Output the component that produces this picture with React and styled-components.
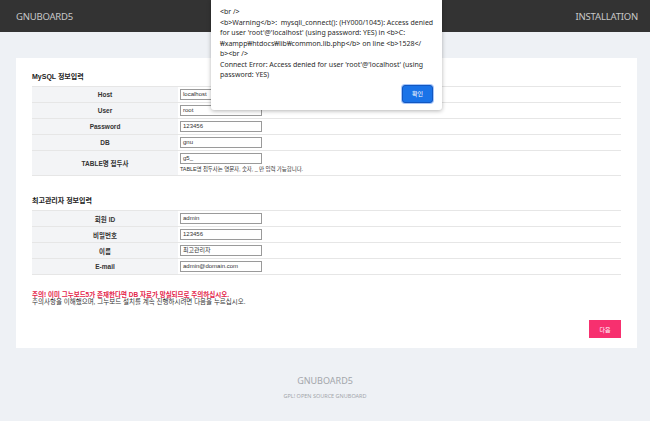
import React from 'react';
import styled, { createGlobalStyle } from 'styled-components';

const GlobalStyle = createGlobalStyle`
    html, body {
        margin: 0;
        padding: 0;
        background: #eef1f5;
        font-family: "Noto Sans", "Noto Sans CJK KR", sans-serif;
    }
`

const Page = styled.div`
    position: relative;
    width: 650px;
    min-height: 421px;
`

const Header = styled.header`
    height: 32px;
    background: #333333;
    display: flex;
    align-items: center;
    justify-content: space-between;
    padding: 0 12px 0 16px;
    color: #c8c8c8;
    font-size: 9.5px;
    letter-spacing: -0.2px;
`

const Card = styled.main`
    margin: 26px 13px 0 16px;
    background: #fff;
    padding: 12px 16px 10px;
    height: 268px;
    display: flex;
    flex-direction: column;
`

const SectionTitle = styled.h2`
    margin: 0 0 2px;
    height: 14px;
    line-height: 14px;
    font-size: 7px;
    font-weight: bold;
    color: #222;
    font-family: "Liberation Sans", "Noto Sans CJK KR", sans-serif;
`

const Table = styled.table`
    width: 100%;
    border-collapse: collapse;
    margin-bottom: ${p => p.$gap || 0}px;

    tr {
        border-top: 1px solid #e6e6e6;
        border-bottom: 1px solid #e6e6e6;
    }
`

const Label = styled.th`
    width: 146px;
    height: ${p => p.$tall ? 24 : 15}px;
    padding: 0;
    background: #f3f4f6;
    font-size: 6.5px;
    font-weight: bold;
    color: #333;
    text-align: center;
    font-family: "Liberation Sans", "Noto Sans CJK KR", sans-serif;
`

const Cell = styled.td`
    padding: 0 0 0 2px;
    vertical-align: middle;
`

const Input = styled.div`
    box-sizing: border-box;
    width: 82px;
    height: 11px;
    border: 1px solid #9a9a9a;
    font-size: 6px;
    line-height: 9px;
    padding-left: 2px;
    color: #333;
    font-family: "Liberation Sans", "Noto Sans CJK KR", sans-serif;
`

const Hint = styled.div`
    font-size: 5.5px;
    line-height: 7px;
    color: #333;
    margin-top: 2px;
    letter-spacing: -0.1px;
    font-family: "Liberation Sans", "Noto Sans CJK KR", sans-serif;
`

const Notice = styled.p`
    margin: 0;
    font-size: 6.5px;
    line-height: 7px;
    color: ${p => p.$warn ? '#e4234a' : '#333'};
    font-weight: ${p => p.$warn ? 'bold' : 'normal'};
    font-family: "Liberation Sans", "Noto Sans CJK KR", sans-serif;
`

const Actions = styled.div`
    margin-top: auto;
    display: flex;
    justify-content: flex-end;
`

const NextButton = styled.button`
    width: 32px;
    height: 18px;
    border: 0;
    padding: 0;
    background: #f7306f;
    color: #fff;
    font-size: 6px;
    font-family: "Noto Sans CJK KR", sans-serif;
`

const Footer = styled.footer`
    text-align: center;
    color: #a3a6ab;
    padding-top: 27px;
`

const FooterTitle = styled.div`
    font-size: 9px;
    line-height: 12px;
`

const FooterSub = styled.div`
    font-size: 5.5px;
    margin-top: 5px;
`

const Dialog = styled.div`
    position: absolute;
    left: 211px;
    top: 0;
    width: 231px;
    height: 110px;
    box-sizing: border-box;
    background: #fff;
    border-radius: 0 0 3px 3px;
    box-shadow: 0 1px 4px rgba(0, 0, 0, 0.3);
    padding: 7px 9px 0 9px;
    font-family: "Noto Sans", "Noto Sans CJK KR", sans-serif;
`

const DialogText = styled.div`
    font-size: 7px;
    line-height: 10.5px;
    color: #2b2b2b;
    white-space: pre;
`

const DialogActions = styled.div`
    display: flex;
    justify-content: flex-end;
    margin-top: 4px;
`

const OkButton = styled.button`
    width: 31px;
    height: 18px;
    border-radius: 3px;
    border: 1px solid #1257c0;
    box-shadow: 0 0 0 1px #a8c7fa;
    background: #1a73e8;
    color: #fff;
    font-size: 6px;
    padding: 0;
    font-family: "Noto Sans CJK KR", sans-serif;
`

const mysqlRows = [
    ['Host', 'localhost'],
    ['User', 'root'],
    ['Password', '123456'],
    ['DB', 'gnu'],
]

const adminRows = [
    ['회원 ID', 'admin'],
    ['비밀번호', '123456'],
    ['이름', '최고관리자'],
    ['E-mail', 'admin@domain.com'],
]

// the alert wraps exactly like this in the screenshot
const message = [
    '<br />',
    '<b>Warning</b>:  mysqli_connect(): (HY000/1045): Access denied',
    "for user 'root'@'localhost' (using password: YES) in <b>C:",
    '₩xampp₩htdocs₩lib₩common.lib.php</b> on line <b>1528</',
    'b><br />',
    "Connect Error: Access denied for user 'root'@'localhost' (using",
    'password: YES)',
].join('\n')

export default function App() {
    return (
        <Page>
            <GlobalStyle />
            <Header>
                <span>GNUBOARD5</span>
                <span>INSTALLATION</span>
            </Header>

            <Card>
                <SectionTitle>MySQL 정보입력</SectionTitle>
                <Table $gap={18}>
                    <tbody>
                        {mysqlRows.map(([label, value]) => (
                            <tr key={label}>
                                <Label>{label}</Label>
                                <Cell><Input>{value}</Input></Cell>
                            </tr>
                        ))}
                        <tr>
                            <Label $tall>TABLE명 접두사</Label>
                            <Cell>
                                <Input>g5_</Input>
                                <Hint>TABLE명 접두사는 영문자, 숫자, _ 만 입력 가능합니다.</Hint>
                            </Cell>
                        </tr>
                    </tbody>
                </Table>

                <SectionTitle>최고관리자 정보입력</SectionTitle>
                <Table $gap={16}>
                    <tbody>
                        {adminRows.map(([label, value]) => (
                            <tr key={label}>
                                <Label>{label}</Label>
                                <Cell><Input>{value}</Input></Cell>
                            </tr>
                        ))}
                    </tbody>
                </Table>

                <Notice $warn>주의! 이미 그누보드5가 존재한다면 DB 자료가 망실되므로 주의하십시오.</Notice>
                <Notice>주의사항을 이해했으며, 그누보드 설치를 계속 진행하시려면 다음을 누르십시오.</Notice>

                <Actions>
                    <NextButton>다음</NextButton>
                </Actions>
            </Card>

            <Footer>
                <FooterTitle>GNUBOARD5</FooterTitle>
                <FooterSub>GPL! OPEN SOURCE GNUBOARD</FooterSub>
            </Footer>

            <Dialog>
                <DialogText>{message}</DialogText>
                <DialogActions>
                    <OkButton>확인</OkButton>
                </DialogActions>
            </Dialog>
        </Page>
    );
}
